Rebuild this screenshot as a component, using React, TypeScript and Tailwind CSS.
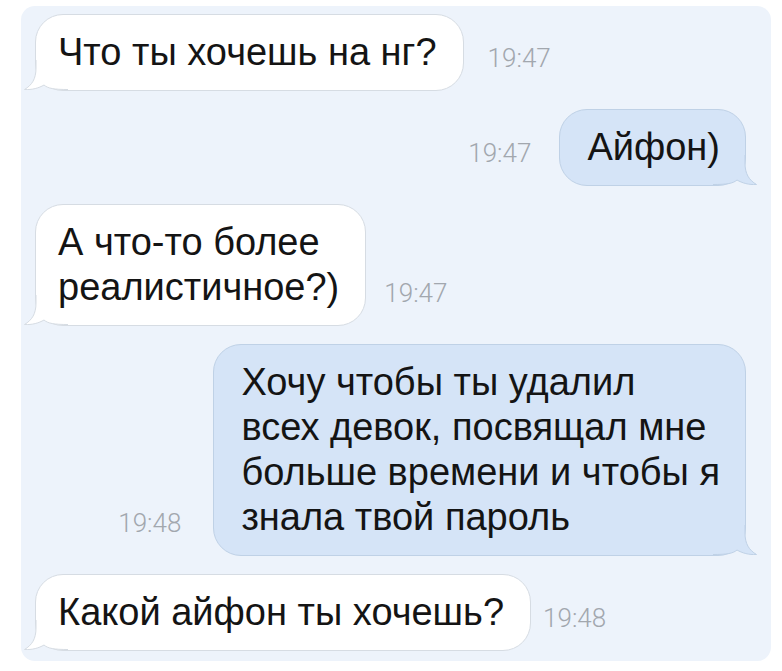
import type { ReactNode } from "react";

const FONT = "font-['Liberation_Sans','Helvetica','Arial',sans-serif]";

function Tail({ side, fill, stroke }: { side: "left" | "right"; fill: string; stroke: string }) {
  const pos = side === "left" ? "left-[-12px]" : "right-[-12px] -scale-x-100";
  return (
    <svg
      className={`absolute bottom-0 ${pos} pointer-events-none`}
      width="44"
      height="30"
      viewBox="0 0 44 30"
    >
      <path
        d="M12 0 L12 8 C12 19 8 25 0.5 29.5 C 8 30 15 28 20 25 C 24 28.5 30 29.5 44 29.5 L44 0 Z"
        fill={fill}
      />
      <path
        d="M12 0 L12 8 C12 19 8 25 0.5 29.5 C 8 30 15 28 20 25 C 24 28.5 30 29.5 44 29.5"
        fill="none"
        stroke={stroke}
        strokeWidth="1"
      />
    </svg>
  );
}

function Time({ t }: { t: string }) {
  return (
    <span className="font-['Roboto','Liberation_Sans',sans-serif] font-light text-[26px] leading-none text-[#a2a7ae] mb-[20px] shrink-0">
      {t}
    </span>
  );
}

function Incoming({ children, time, gap }: { children: ReactNode; time: string; gap: string }) {
  return (
    <div className={`flex items-end ${gap}`}>
      <div className="relative rounded-[28px] border border-[#d6dce3] bg-white pl-[22px] pr-[26px] py-[15px] text-[38px] leading-[45px] text-[#141414]">
        <span className="relative z-10">{children}</span>
        <Tail side="left" fill="#ffffff" stroke="#d6dce3" />
      </div>
      <Time t={time} />
    </div>
  );
}

function Outgoing({ children, time, gap }: { children: ReactNode; time: string; gap: string }) {
  return (
    <div className={`flex items-end justify-end ${gap}`}>
      <Time t={time} />
      <div className="relative rounded-[28px] border border-[#bfd1e6] bg-[#d5e4f7] pl-[27px] pr-[25px] py-[15px] text-[38px] leading-[45px] text-[#141414]">
        <span className="relative z-10">{children}</span>
        <Tail side="right" fill="#d5e4f7" stroke="#bfd1e6" />
      </div>
    </div>
  );
}

export default function App() {
  return (
    <div className={`min-h-screen bg-white pt-[6px] pl-[21px] pr-[11px] ${FONT}`}>
      <div className="flex h-[655px] flex-col gap-[18px] rounded-[14px] bg-[#edf3fb] pl-[14px] pr-[25px] pt-[8px]">
        <Incoming time="19:47" gap="gap-[24px]">
          Что ты хочешь на нг?
        </Incoming>
        <Outgoing time="19:47" gap="gap-[28px]">
          Айфон)
        </Outgoing>
        <Incoming time="19:47" gap="gap-[18px]">
          А что-то более
          <br />
          реалистичное?)
        </Incoming>
        <Outgoing time="19:48" gap="gap-[32px]">
          Хочу чтобы ты удалил
          <br />
          всех девок, посвящал мне
          <br />
          больше времени и чтобы я
          <br />
          знала твой пароль
        </Outgoing>
        <Incoming time="19:48" gap="gap-[12px]">
          Какой айфон ты хочешь?
        </Incoming>
      </div>
    </div>
  );
}
